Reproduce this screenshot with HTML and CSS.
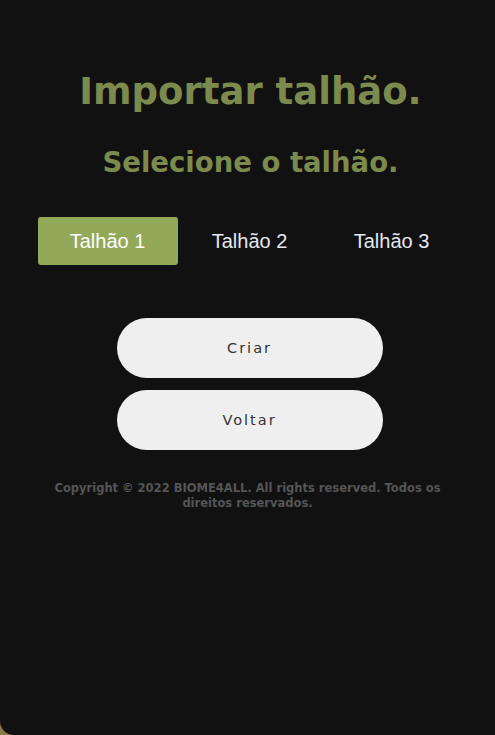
FILE: index.html
```html
<!DOCTYPE html>
<html lang="pt">
<head>
    <meta charset="UTF-8">
    <meta name="viewport" content="width=device-width, initial-scale=1.0">
    <title>Importar talhão</title>
    <link rel="stylesheet" href="styles.css">
</head>
<body>

    <!-- Main panel -->
    <div class="panel">
        <h1 class="title">Importar talhão.</h1>
        <h2 class="subtitle">Selecione o talhão.</h2>

        <!-- Plot tabs -->
        <div class="tabs">
            <button class="tab active">Talhão 1</button>
            <button class="tab">Talhão 2</button>
            <button class="tab">Talhão 3</button>
        </div>

        <!-- Actions -->
        <div class="actions">
            <button class="pill">Criar</button>
            <button class="pill">Voltar</button>
        </div>

        <p class="copyright">Copyright © 2022 BIOME4ALL. All rights reserved. Todos os direitos reservados.</p>
    </div>

</body>
</html>
```

FILE: styles.css
```css
/* Reset */
* {
    margin: 0;
    padding: 0;
    box-sizing: border-box;
}

body {
    height: 100vh;
    background: #8a7a50;
    font-family: 'DejaVu Sans', sans-serif;
}

/* Dark panel */
.panel {
    height: 100%;
    background: #111111;
    border-bottom-left-radius: 14px;
    display: flex;
    flex-direction: column;
    align-items: center;
    padding-top: 70px;
}

.title {
    color: #7d8a4e;
    font-size: 37px;
    font-weight: 700;
    line-height: 44px;
    margin-left: 6px;
}

.subtitle {
    color: #7d8a4e;
    font-size: 27.5px;
    font-weight: 700;
    line-height: 34px;
    margin-top: 31px;
    margin-left: 6px;
}

/* Tabs */
.tabs {
    display: flex;
    gap: 2px;
    margin-top: 38px;
    margin-left: 4px;
}

.tab {
    width: 140px;
    height: 48px;
    border: none;
    border-radius: 3px;
    background: transparent;
    color: #e6e8f0;
    font-family: 'Liberation Sans', Arial, sans-serif;
    font-size: 20px;
}

.tab.active {
    background: #93a95a;
    color: #ffffff;
}

/* Pill buttons */
.actions {
    display: flex;
    flex-direction: column;
    gap: 12px;
    margin-top: 53px;
    margin-left: 4px;
}

.pill {
    width: 266px;
    height: 60px;
    border: none;
    border-radius: 30px;
    background: #efefef;
    color: #333333;
    font-family: 'DejaVu Sans', sans-serif;
    font-size: 14.5px;
    letter-spacing: 2px;
}

.copyright {
    width: 400px;
    margin-top: 31px;
    color: #555555;
    font-size: 11.5px;
    font-weight: 700;
    line-height: 15px;
    text-align: center;
}
```
